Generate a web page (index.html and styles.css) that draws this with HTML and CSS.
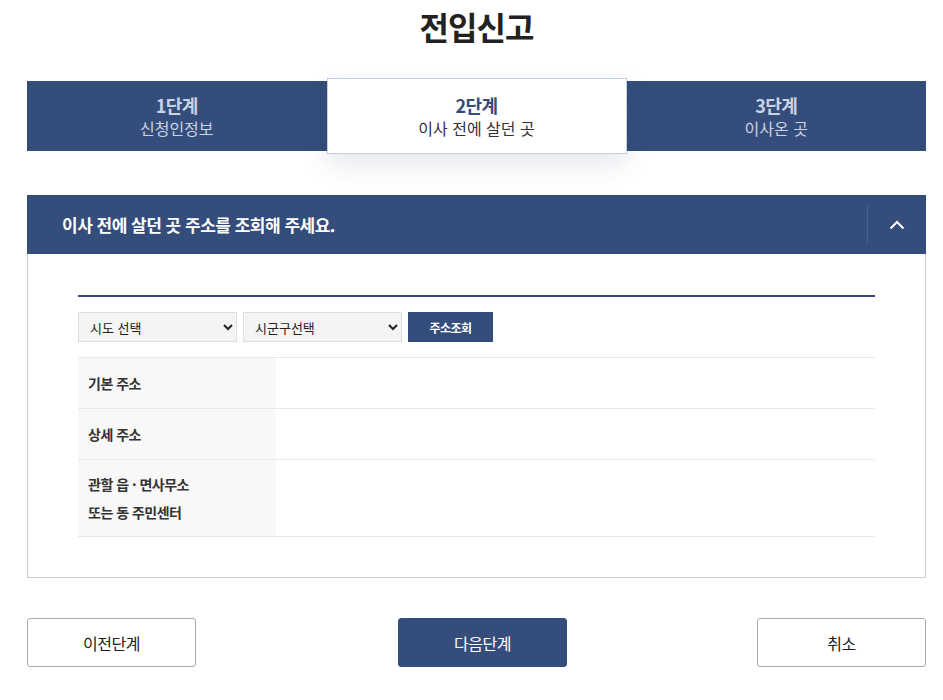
FILE: index.html
```html
<!DOCTYPE html>
<html lang="ko">
<head>
    <meta charset="UTF-8">
    <meta name="viewport" content="width=device-width, initial-scale=1.0">
    <title>전입신고</title>
    <link rel="stylesheet" href="styles.css">
</head>
<body>
    <div class="page">
        <!-- Title -->
        <h1 class="page-title">전입신고</h1>

        <!-- Steps -->
        <ol class="steps">
            <li class="step">
                <strong>1단계</strong>
                <span>신청인정보</span>
            </li>
            <li class="step active">
                <strong>2단계</strong>
                <span>이사 전에 살던 곳</span>
            </li>
            <li class="step">
                <strong>3단계</strong>
                <span>이사온 곳</span>
            </li>
        </ol>

        <!-- Address panel -->
        <section class="panel">
            <div class="panel-head">
                <h2>이사 전에 살던 곳 주소를 조회해 주세요.</h2>
                <button class="toggle" type="button" aria-label="접기">
                    <svg width="16" height="10" viewBox="0 0 16 10"><path d="M1.5 8.5 L8 2 L14.5 8.5" fill="none" stroke="#fff" stroke-width="2"/></svg>
                </button>
            </div>
            <div class="panel-body">
                <div class="search-row">
                    <select class="select-box">
                        <option>시도 선택</option>
                    </select>
                    <select class="select-box">
                        <option>시군구선택</option>
                    </select>
                    <button class="search-btn" type="button">주소조회</button>
                </div>

                <div class="addr-table">
                    <div class="addr-row">
                        <div class="addr-label">기본 주소</div>
                        <div class="addr-value"></div>
                    </div>
                    <div class="addr-row">
                        <div class="addr-label">상세 주소</div>
                        <div class="addr-value"></div>
                    </div>
                    <div class="addr-row tall">
                        <div class="addr-label">관할 읍 · 면사무소<br>또는 동 주민센터</div>
                        <div class="addr-value"></div>
                    </div>
                </div>
            </div>
        </section>

        <!-- Bottom buttons -->
        <div class="actions">
            <button class="btn" type="button">이전단계</button>
            <button class="btn primary" type="button">다음단계</button>
            <button class="btn" type="button">취소</button>
        </div>
    </div>
</body>
</html>
```

FILE: styles.css
```css
/* General Styling */
* {
    margin: 0;
    padding: 0;
    box-sizing: border-box;
}

body {
    font-family: "Noto Sans CJK KR", "Noto Sans", sans-serif;
    color: #222;
    background: #fff;
}

.page {
    width: 899px;
    margin-left: 27px;
}

/* Title */
.page-title {
    text-align: center;
    font-size: 32px;
    font-weight: 700;
    line-height: 1;
    letter-spacing: -1px;
    padding-top: 10px;
    height: 78px;
    color: #222;
}

/* Steps */
.steps {
    list-style: none;
    display: flex;
    height: 70px;
    margin-top: 3px;
    background: #344d7a;
}

.step {
    flex: 1;
    display: flex;
    flex-direction: column;
    align-items: center;
    justify-content: center;
    color: #c9d3e6;
    letter-spacing: -0.5px;
}

.step strong {
    font-size: 18px;
    font-weight: 700;
    line-height: 22px;
}

.step span {
    font-size: 16px;
    line-height: 22px;
    margin-top: 1px;
    letter-spacing: 0;
}

.step.active {
    flex: 0 0 300px;
    margin: -3px 0;
    background: #fff;
    border: 1px solid #c3cedf;
    box-shadow: 0 10px 24px rgba(40, 60, 100, 0.12);
    position: relative;
    z-index: 1;
}

.step.active strong {
    color: #344d7a;
}

.step.active span {
    color: #333;
}

/* Panel */
.panel {
    margin-top: 44px;
}

.panel-head {
    display: flex;
    align-items: center;
    height: 59px;
    background: #344d7a;
    color: #fff;
}

.panel-head h2 {
    flex: 1;
    font-size: 17px;
    font-weight: 700;
    letter-spacing: -0.5px;
    padding-left: 35px;
}

.toggle {
    width: 59px;
    height: 39px;
    border: none;
    border-left: 1px solid #4a6290;
    background: none;
    display: flex;
    align-items: center;
    justify-content: center;
    cursor: pointer;
}

.panel-body {
    border: 1px solid #ccc;
    border-top: none;
    padding: 41px 50px 40px;
}

.search-row {
    border-top: 2px solid #344d7a;
    padding: 15px 0 15px;
    display: flex;
    gap: 6px;
}

.select-box {
    width: 159px;
    height: 30px;
    background: #f4f4f4;
    border: 1px solid #ddd;
    font-family: inherit;
    font-size: 13px;
    color: #222;
    padding: 0 5px 0 7px;
    border-radius: 0;
}

.search-btn {
    width: 85px;
    height: 30px;
    border: none;
    background: #344d7a;
    color: #fff;
    font-family: inherit;
    font-size: 12px;
    font-weight: 700;
    letter-spacing: -0.5px;
}

/* Address table */
.addr-table {
    border-top: 1px solid #e8e8e8;
}

.addr-row {
    display: flex;
    height: 51px;
    border-bottom: 1px solid #e8e8e8;
}

.addr-row.tall {
    height: 77px;
}

.addr-label {
    width: 198px;
    background: #f8f8f8;
    display: flex;
    align-items: center;
    padding-left: 10px;
    font-size: 14px;
    font-weight: 700;
    color: #333;
    line-height: 28px;
    letter-spacing: -0.5px;
}

.addr-value {
    flex: 1;
}

/* Bottom buttons */
.actions {
    display: flex;
    justify-content: space-between;
    margin-top: 40px;
}

.btn {
    width: 169px;
    height: 49px;
    border: 1px solid #aaa;
    border-radius: 3px;
    background: #fff;
    color: #222;
    font-family: inherit;
    font-size: 16px;
    letter-spacing: -0.5px;
    cursor: pointer;
}

.btn.primary {
    margin-left: 12px;
    background: #344d7a;
    border-color: #344d7a;
    color: #fff;
}
```
